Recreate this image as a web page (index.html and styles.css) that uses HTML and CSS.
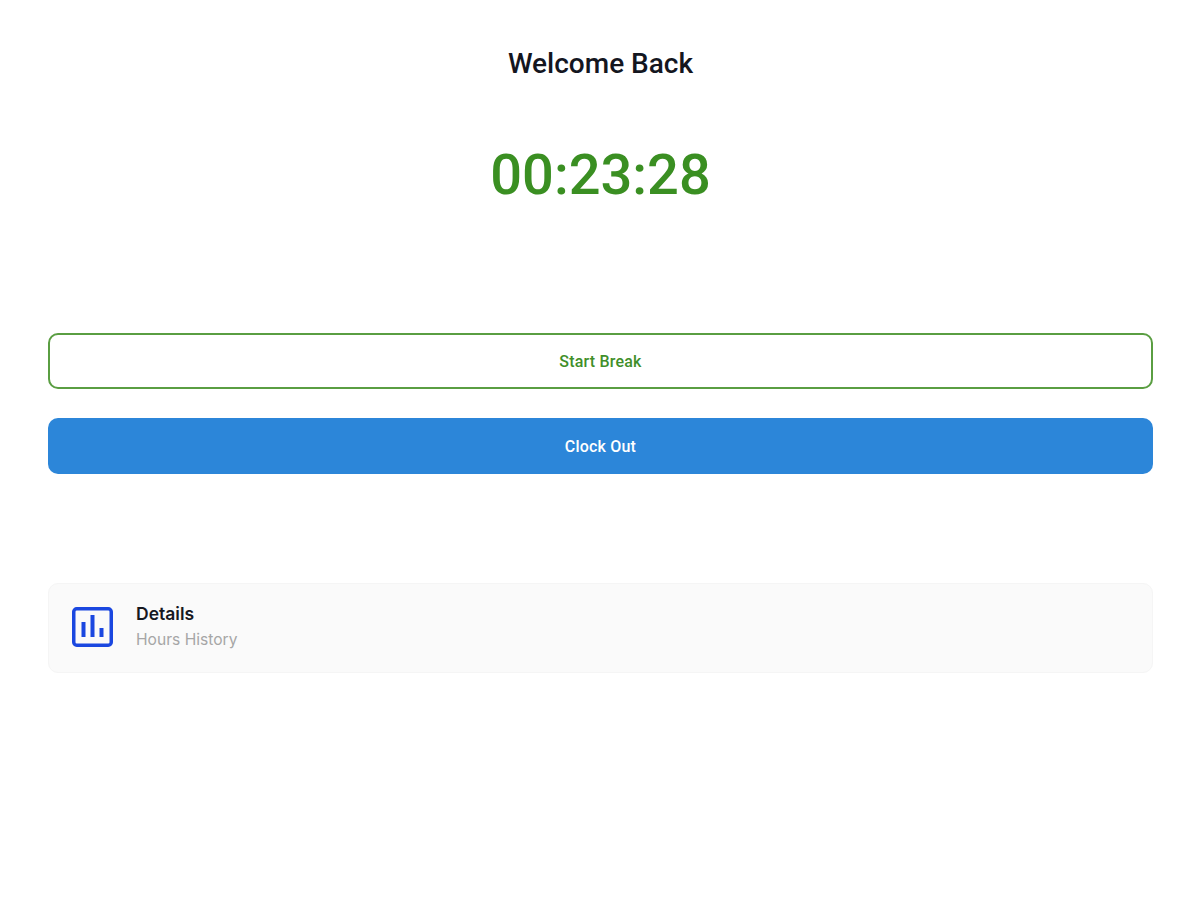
FILE: index.html
```html
<!DOCTYPE html>
<html lang="en">
<head>
<meta charset="utf-8">
<title>Welcome Back</title>
<link rel="stylesheet" href="styles.css">
</head>
<body>
<main class="page">
  <h1 class="title">Welcome Back</h1>
  <div class="timer">00:23:28</div>
  <div class="actions">
    <button class="btn btn-outline" type="button">Start Break</button>
    <button class="btn btn-solid" type="button">Clock Out</button>
  </div>
  <section class="card">
    <svg class="card-icon" width="44" height="44" viewBox="0 0 44 44" fill="none" aria-hidden="true">
      <rect x="2.75" y="2.75" width="37.5" height="36.5" rx="3" stroke="#1a47e0" stroke-width="3.5"/>
      <path d="M12.5 16v15M21.5 9v22M30.5 22v9" stroke="#1a47e0" stroke-width="4"/>
    </svg>
    <div class="card-text">
      <div class="card-title">Details</div>
      <div class="card-sub">Hours History</div>
    </div>
  </section>
</main>
</body>
</html>
```
FILE: styles.css
```css
* { box-sizing: border-box; }
html, body { margin: 0; height: 100%; background: #fff; }
body { font-family: Roboto, "Liberation Sans", sans-serif; }
.page { padding: 45px 47px 0 48px; display: flex; flex-direction: column; }
.title { margin: 0; font-size: 28px; line-height: 38px; font-weight: 500; color: #14161f; text-align: center; }
.timer { margin-top: 59px; font-size: 56px; line-height: 66px; font-weight: 500; color: #3a8f22; text-align: center; }
.actions { margin-top: 125px; display: flex; flex-direction: column; gap: 29px; }
.btn { height: 56px; width: 100%; border-radius: 10px; font-family: inherit; font-size: 16px; font-weight: 500; letter-spacing: 0.2px; padding: 0; }
.btn-outline { background: #fff; border: 2px solid #5a9e42; color: #3f8f2a; }
.btn-solid { background: #2c86d9; border: 0; color: #fff; }
.card { margin-top: 109px; height: 90px; padding: 0 16px 0 22px; display: flex; align-items: center; gap: 21px; background: #fafafa; border: 1px solid #f5f5f5; border-radius: 10px; }
.card-icon { flex: none; }
.card-text { display: flex; flex-direction: column; gap: 5px; padding-bottom: 4px; }
.card-title { font-family: Inter, Roboto, sans-serif; font-size: 17.5px; line-height: 21px; font-weight: 600; color: #16181f; }
.card-sub { font-family: Inter, Roboto, sans-serif; font-size: 15.6px; line-height: 21px; color: #a6a6a6; }
```
